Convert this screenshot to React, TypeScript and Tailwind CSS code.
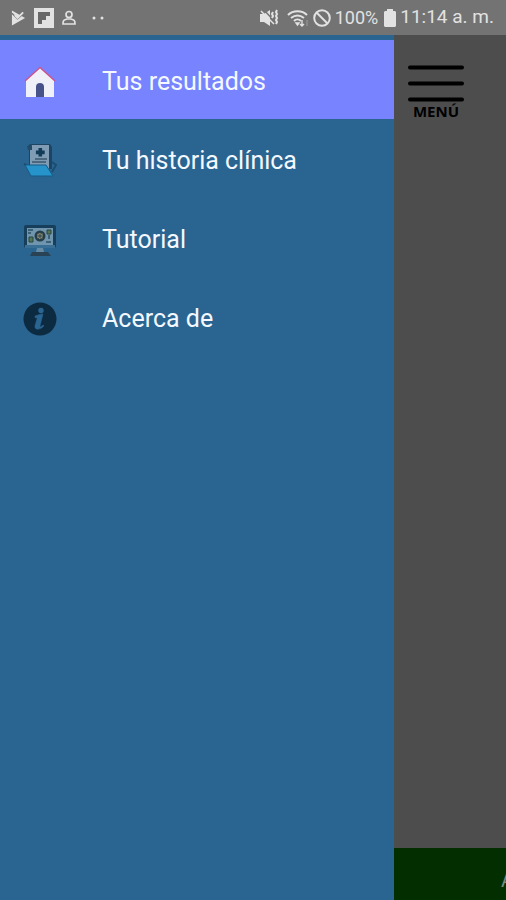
import type { ReactNode } from 'react';

const HomeIcon = () => (
  <svg viewBox="0 0 34 34" className="size-[34px]" aria-hidden="true">
    <path d="M3 15 17 2l14 13v17H3z" fill="#f0f1f8" />
    <path d="M2 16 17 2.5 32 16" fill="none" stroke="#cb528c" strokeWidth="1.5" />
    <path d="M13 32V22a4 4 0 0 1 8 0v10z" fill="#47528a" />
  </svg>
);

const HistoryIcon = () => (
  <svg viewBox="0 0 34 34" className="size-[34px]" aria-hidden="true">
    <path d="M1 20l4 2M29 18l4 3-4 7" fill="none" stroke="#1b4d70" strokeWidth="2" />
    <path d="M5 3q0-3 4-3h18l2 3v22H6V6z" fill="#1d4563" />
    <path d="M9 1h17v24H7V5z" fill="#7f9cb4" />
    <path d="M4 2h5v4H5z" fill="#234b68" />
    <path d="M15.5 4h3.6v2.4h2.6v3.8h-2.6v2.4h-3.6v-2.4h-2.6V6.4h2.6z" fill="#123b58" />
    <path d="M12 15h12M9 18h14" stroke="#4b687e" strokeWidth="1.8" />
    <path d="M2 21h21l7 11H8z" fill="#2694ca" stroke="#155b88" strokeWidth="1" />
  </svg>
);

const TutorialIcon = () => (
  <svg viewBox="0 0 34 34" className="size-[34px]" aria-hidden="true">
    <rect x="1" y="2" width="32" height="23" rx="2" fill="#173e5b" />
    <path d="M4 5h26v17H4z" fill="#7095ae" />
    <path d="M2 22h30v3H2z" fill="#396f94" />
    <path d="M14 25h6l1 4h-8z" fill="#668ba5" />
    <path d="M9 29h16l3 4H7z" fill="#2a4354" />
    <circle cx="17" cy="13" r="5.5" fill="#263e48" />
    <circle cx="17" cy="13" r="3.2" fill="#8b8b72" stroke="#1f3542" strokeDasharray="2 1" />
    <path d="M15 13h4M17 11v4" stroke="#294552" />
    <path d="M6 14h4v5H6zM24 7h4v4h-4z" fill="#527556" stroke="#28443f" />
    <path d="M5 7h5M5 10h3M26 12v4M23 19h5" stroke="#2b5066" strokeWidth="1.5" />
  </svg>
);

const InfoIcon = () => (
  <svg viewBox="0 0 34 34" className="size-[34px]" aria-hidden="true">
    <circle cx="17" cy="17" r="16.5" fill="#0c2a40" />
    <circle cx="18" cy="8.5" r="2.7" fill="#2a6592" />
    <path
      d="M12 14c3-1 5-2 8-2l-3 12c-.3 1.3 1 1 3-1l1 .8c-2 3-8 5-9 1.6-.3-1 .2-2.4.6-3.8l1.5-5c.3-1-.6-.8-2-.7z"
      fill="#2a6592"
      stroke="#2a6592"
      strokeWidth=".5"
    />
  </svg>
);

const StatusBar = () => (
  <header className="flex h-[35px] items-center justify-between bg-[#737373] pr-3 pl-[11px] text-[#e2e2e2]">
    <div className="flex items-center gap-2">
      <svg viewBox="0 0 16 18" className="h-[18px] w-[15px]" aria-hidden="true">
        <path d="M1 1l14 8-14 8z" fill="currentColor" />
        <path d="M1 4l6 6 8-7" fill="none" stroke="#737373" strokeWidth="1.4" />
        <path d="M4 6l3 3 6-6" fill="none" stroke="currentColor" strokeWidth="2" />
      </svg>
      <svg viewBox="0 0 20 20" className="size-5" aria-hidden="true">
        <path d="M0 0h20v20H0z" fill="currentColor" />
        <path d="M4 4h12v4h-4v4H8v4H4z" fill="#686868" />
      </svg>
      <svg viewBox="0 0 14 16" className="h-4 w-3.5" fill="none" stroke="currentColor" strokeWidth="1.7" aria-hidden="true">
        <circle cx="7" cy="4.5" r="3" />
        <path d="M5 9C2 10 1 10 1 14h12c0-4-1-4-4-5z" />
      </svg>
      <svg viewBox="0 0 12 4" className="ml-2 h-1 w-3" fill="currentColor" aria-hidden="true">
        <circle cx="2" cy="2" r="1.5" />
        <circle cx="10" cy="2" r="1.5" />
      </svg>
    </div>
    <div className="flex items-center gap-1">
      <svg viewBox="0 0 20 18" className="h-[18px] w-5" aria-hidden="true">
        <path d="M1 5h4l6-4v16l-6-4H1z" fill="currentColor" />
        <path d="M5 1l13 14" stroke="#737373" strokeWidth="1.5" />
        <path d="M2 2l13 13" stroke="currentColor" strokeWidth="1.5" />
        <path d="M14 3l-1 2 1 2-1 2M18 1l-1 2 1 2-1 2 1 2-1 2 1 2-1 2" fill="none" stroke="currentColor" strokeWidth="2" />
      </svg>
      <svg viewBox="0 0 22 18" className="ml-1 h-[18px] w-[22px]" fill="none" stroke="currentColor" aria-hidden="true">
        <path d="M1 6c5-5 14-5 19 0M4 9c4-3 9-3 13 0M7 12c2-2 5-2 7 0" strokeWidth="2" />
        <path d="M9 14h3l-1.5 2zM15 11v6m-2-2 2 2 2-2" strokeWidth="1.4" />
        <path d="M20 17v-6" stroke="#929292" strokeWidth="1.4" />
      </svg>
      <svg viewBox="0 0 18 18" className="size-[18px]" fill="none" stroke="currentColor" strokeWidth="2" aria-hidden="true">
        <circle cx="9" cy="9" r="7.8" />
        <path d="M3.5 3.5l11 11" />
      </svg>
      <span className="text-lg">100%</span>
      <svg viewBox="0 0 12 18" className="ml-0.5 h-[18px] w-3" aria-hidden="true">
        <path d="M3 2V0h6v2h2l1 1v14l-1 1H1l-1-1V3l1-1z" fill="currentColor" />
      </svg>
      <span className="text-[19px]">11:14 a. m.</span>
    </div>
  </header>
);

type DrawerItemProps = {
  icon: ReactNode;
  label: string;
  active?: boolean;
};

const DrawerItem = ({ icon, label, active }: DrawerItemProps) => (
  <li>
    <a
      href="#"
      aria-current={active ? 'page' : undefined}
      className={`flex h-[79px] items-center gap-[45px] pt-1 pl-[23px] text-[25px] text-[#f4f8ff] ${
        active ? 'bg-[#7783ff]' : ''
      }`}
    >
      {icon}
      <span>{label}</span>
    </a>
  </li>
);

const App = () => {
  return (
    <div className="flex min-h-screen flex-col overflow-hidden bg-[#4d4d4d] font-['Roboto',sans-serif]">
      <StatusBar />
      <div className="flex grow">
        {/* Drawer */}
        <nav className="w-[78%] max-w-[394px] shrink-0 bg-[#2a6592] pt-[5px]">
          <ul>
            <DrawerItem icon={<HomeIcon />} label="Tus resultados" active />
            <DrawerItem icon={<HistoryIcon />} label="Tu historia clínica" />
            <DrawerItem icon={<TutorialIcon />} label="Tutorial" />
            <DrawerItem icon={<InfoIcon />} label="Acerca de" />
          </ul>
        </nav>

        {/* Dimmed page behind the drawer */}
        <main className="flex min-w-0 grow flex-col justify-between">
          <button type="button" className="ml-3.5 flex w-14 flex-col items-center pt-[30px] text-black">
            <svg viewBox="0 0 56 38" className="h-[38px] w-14" aria-hidden="true">
              <path d="M2 2.5h52M2 18.5h52M2 34.5h52" stroke="currentColor" strokeWidth="4" strokeLinecap="round" />
            </svg>
            <span className="font-['Noto_Sans',sans-serif] text-[15px] leading-4 font-bold">MENÚ</span>
          </button>
          <footer className="flex h-[52px] items-center overflow-hidden bg-[#032f00] pt-3 pl-[107px] text-xl text-[#808780]">
            A
          </footer>
        </main>
      </div>
    </div>
  );
};

export default App;
